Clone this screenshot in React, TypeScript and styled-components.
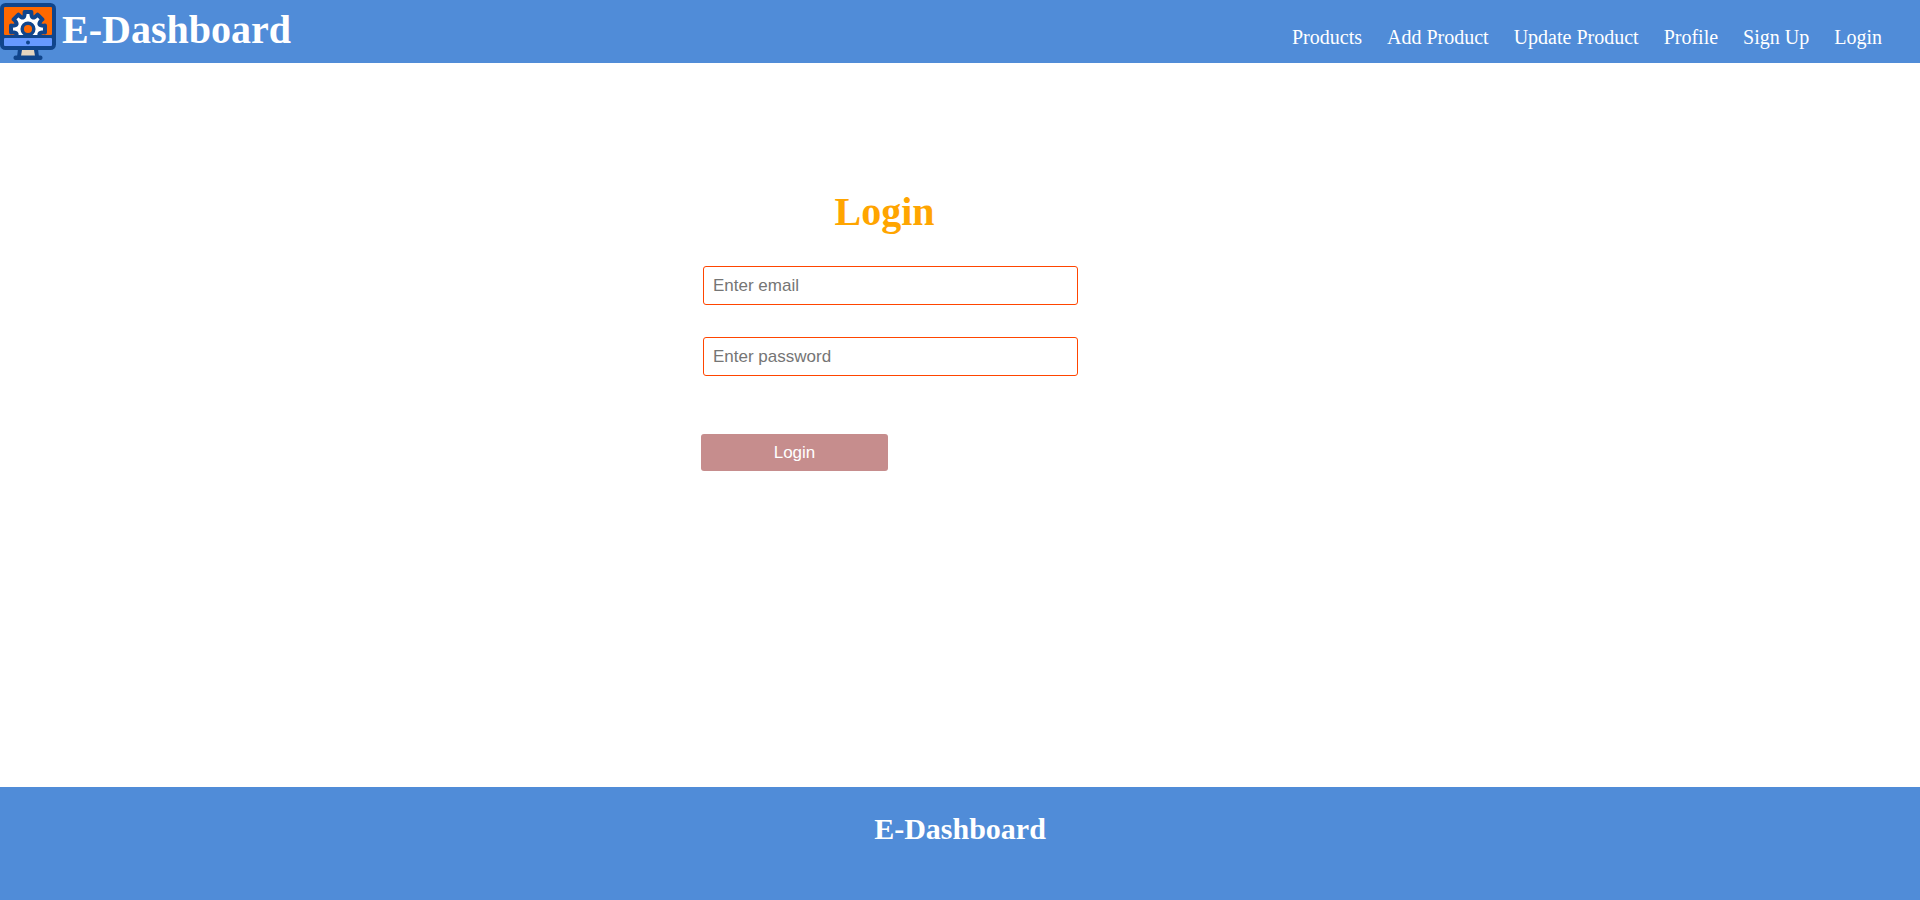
import React from "react";
import styled, { createGlobalStyle } from "styled-components";

const GlobalStyle = createGlobalStyle`
  *, *::before, *::after { box-sizing: border-box; }
  body {
    margin: 0;
    background: #fff;
    font-family: "Liberation Serif", "Times New Roman", serif;
  }
`;

const Page = styled.div`
  display: flex;
  flex-direction: column;
  min-height: 100vh;
`;

const Header = styled.header`
  display: flex;
  align-items: flex-start;
  justify-content: space-between;
  padding: 3px 38px 3px 0;
  background: #508cd8;
  color: #fff;
`;

const Brand = styled.div`
  display: flex;
  gap: 6px;
`;

const BrandName = styled.h1`
  margin: 0;
  font-size: 40px;
  line-height: 54px;
`;

const Logo = styled.svg`
  display: block;
  width: 56px;
  height: 57px;
`;

const Nav = styled.nav`
  display: flex;
  flex-wrap: wrap;
  gap: 0 25px;
  padding-top: 22px;
`;

const NavLink = styled.a`
  color: #fff;
  font-size: 20px;
  line-height: 24px;
  text-decoration: none;
`;

const Main = styled.main`
  flex: 1;
`;

const Form = styled.form`
  display: flex;
  flex-direction: column;
  width: 377px;
  margin: 126px 0 0 calc(50% - 259px);
`;

const FormTitle = styled.h2`
  margin: 0 0 31px;
  padding-right: 10px;
  color: orange;
  font-size: 40px;
  line-height: 46px;
  text-align: center;
`;

const Field = styled.input`
  height: 39px;
  margin: 0 0 32px 2px;
  padding: 0 9px;
  border: 1px solid orangered;
  border-radius: 3px;
  background: #fff;
  font: 17px "Liberation Sans", Arial, sans-serif;
  &::placeholder { color: #757575; }
`;

const Submit = styled.button`
  width: 187px;
  height: 37px;
  margin-top: 26px;
  padding: 0;
  border: 0;
  border-radius: 3px;
  background: #c68d8d;
  color: #fff;
  font: 17px "Liberation Sans", Arial, sans-serif;
  cursor: pointer;
`;

const Footer = styled.footer`
  min-height: 113px;
  padding-top: 25px;
  background: #508cd8;
  color: #fff;
  text-align: center;
`;

const FooterName = styled.h3`
  margin: 0;
  font-size: 30px;
  line-height: 34px;
`;

const links = ["Products", "Add Product", "Update Product", "Profile", "Sign Up", "Login"];

// Gear outline around (cx, cy): flat teeth joined by scooped valleys.
function gearPath(cx: number, cy: number, valley: number, outer: number, teeth: number) {
  const step = (Math.PI * 2) / teeth;
  const at = (angle: number, r: number) =>
    `${(cx + Math.cos(angle) * r).toFixed(2)} ${(cy + Math.sin(angle) * r).toFixed(2)}`;
  let d = "";
  for (let i = 0; i < teeth; i++) {
    const a = i * step - Math.PI / 2;
    d += `${i ? "L" : "M"}${at(a - 0.25 * step, outer)}L${at(a + 0.25 * step, outer)}`;
    d += `C${at(a + 0.36 * step, valley)} ${at(a + 0.64 * step, valley)} ${at(a + 0.75 * step, outer)}`;
  }
  return `${d}Z`;
}

const LogoMark = () => (
  <Logo viewBox="0 0 56 57" aria-hidden="true">
    <defs>
      <clipPath id="screen"><rect x="4" y="4" width="48" height="28" /></clipPath>
    </defs>
    <path d="M18 46H38L39 54H17Z" fill="#10458c" />
    <path d="M22 47H34L35 53H21Z" fill="#e4d4bf" />
    <rect x="13.500" y="52.500" width="29" height="4.500" rx="2" fill="#10458c" />
    <rect width="56" height="47" rx="5.500" fill="#10458c" />
    <rect x="4" y="4" width="48" height="28" rx="1" fill="#ff6800" />
    <rect x="4" y="35" width="48" height="8" rx="1" fill="#6699ff" />
    <circle cx="28" cy="39.500" r="2" fill="#10458c" />
    <g clipPath="url(#screen)">
      <path d={gearPath(28, 26, 11, 17.3, 8)} fill="#fff" stroke="#10458c" strokeWidth="4" strokeLinejoin="round" />
      <circle cx="28" cy="26" r="5.800" fill="#ff6800" stroke="#10458c" strokeWidth="3.500" />
    </g>
  </Logo>
);

export default function App() {
  return (
    <Page>
      <GlobalStyle />
      <Header>
        <Brand>
          <LogoMark />
          <BrandName>E-Dashboard</BrandName>
        </Brand>
        <Nav aria-label="Main">
          {links.map((label) => <NavLink key={label} href="#">{label}</NavLink>)}
        </Nav>
      </Header>
      <Main>
        <Form onSubmit={(e) => e.preventDefault()}>
          <FormTitle>Login</FormTitle>
          <Field type="email" placeholder="Enter email" aria-label="Email" />
          <Field type="password" placeholder="Enter password" aria-label="Password" />
          <Submit type="submit">Login</Submit>
        </Form>
      </Main>
      <Footer>
        <FooterName>E-Dashboard</FooterName>
      </Footer>
    </Page>
  );
}
